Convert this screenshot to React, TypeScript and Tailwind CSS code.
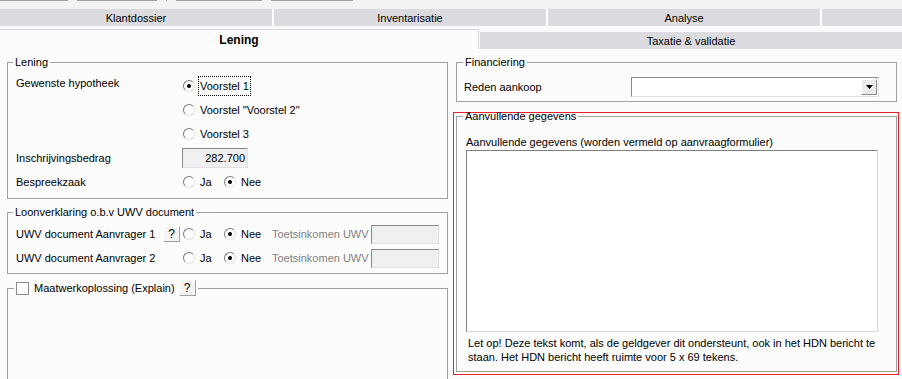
const Radio = ({ checked }: { checked?: boolean }) => (
  <span className="inline-flex w-[12px] h-[12px] shrink-0 items-center justify-center rounded-full border border-t-[#7d7d7d] border-l-[#7d7d7d] border-r-[#e2e2e2] border-b-[#e2e2e2] bg-white">
    {checked && <span className="w-[4px] h-[4px] rounded-full bg-black" />}
  </span>
);

const HelpButton = () => (
  <span className="inline-flex w-[17px] h-[16px] shrink-0 items-center justify-center bg-[#f4f4f4] border border-t-white border-l-white border-r-[#a0a0a0] border-b-[#a0a0a0] text-[12px] leading-none">
    ?
  </span>
);

const RadioOption = ({
  label,
  checked,
  width,
  focused,
}: {
  label: string;
  checked?: boolean;
  width?: string;
  focused?: boolean;
}) => (
  <span className={`flex items-center whitespace-nowrap ${width ?? ""}`}>
    <Radio checked={checked} />
    <span
      className={`ml-[3px] h-[20px] px-[1px] leading-[18px] border ${
        focused ? "border-dotted border-black" : "border-transparent"
      }`}
    >
      {label}
    </span>
  </span>
);

const YesNo = () => (
  <>
    <RadioOption label="Ja" width="w-[41px]" />
    <RadioOption label="Nee" checked width="w-[48px]" />
  </>
);

const ReadonlyBox = ({ value, className }: { value?: string; className: string }) => (
  <span
    className={`flex items-center justify-end pr-[2px] bg-[#f0f0f0] border border-t-[#8a8a8a] border-l-[#8a8a8a] border-r-[#e0e0e0] border-b-[#e0e0e0] ${className}`}
  >
    {value}
  </span>
);

const UwvRow = ({ label, help }: { label: string; help?: boolean }) => (
  <div className="flex items-center h-[24px] whitespace-nowrap">
    {help ? (
      <>
        <span className="w-[147px]">{label}</span>
        <HelpButton />
        <span className="w-[3px]" />
      </>
    ) : (
      <span className="w-[167px]">{label}</span>
    )}
    <YesNo />
    <span className="w-[99px] text-[#808080]">Toetsinkomen UWV</span>
    <ReadonlyBox className="w-[68px] h-[19px]" />
  </div>
);

export default function App() {
  const topTabs = [
    { label: "Klantdossier", w: "w-[272px]" },
    { label: "Inventarisatie", w: "w-[272px]" },
    { label: "Analyse", w: "w-[272px]" },
    { label: "", w: "flex-1" },
  ];

  return (
    <div className="w-[902px] h-[379px] overflow-hidden bg-[#fcfcfc] text-[11px] leading-[14px] text-black font-['Liberation_Sans',Arial,sans-serif]">
      {/* strip of tabs above, cut off */}
      <div className="h-[9px] bg-[#f3f3f3] flex items-start">
        <span className="h-px w-[68px] bg-[#a0a0a0]" />
        <span className="h-px w-[80px] ml-[9px] bg-[#a0a0a0]" />
        <span className="h-px w-px ml-[9px] bg-[#a0a0a0]" />
        <span className="h-px w-[86px] ml-[9px] bg-[#a0a0a0]" />
        <span className="h-px w-[82px] ml-[9px] bg-[#a0a0a0]" />
      </div>

      {/* first tab row */}
      <div className="flex h-[17px] gap-[2px] bg-white">
        {topTabs.map((t, i) => (
          <div key={i} className={`${t.w} bg-[#dcdce0] flex items-center justify-center`}>
            {t.label}
          </div>
        ))}
      </div>

      {/* second tab row */}
      <div className="flex h-[23px] pt-[3px] bg-[#fafafa]">
        <div className="w-[479px] border-t border-r border-[#dadada] bg-[#fcfcfc] flex items-center justify-center font-bold text-[12px]">
          Lening
        </div>
        <div className="flex-1 ml-[1px] mt-[3px] h-[17px] bg-[#dcdce0] flex items-center justify-center">
          Taxatie &amp; validatie
        </div>
      </div>

      <div className="flex">
        {/* left column */}
        <div className="w-[451px] pt-[6px]">
          <fieldset className="ml-[7px] w-[441px] border border-[#a0a0a0] px-[8px] pt-[5px] pb-[4px]">
            <legend className="-ml-[3px] px-[2px] leading-[14px]">Lening</legend>
            <div className="flex">
              <span className="w-[167px] pt-[2px]">Gewenste hypotheek</span>
              <div className="flex flex-col">
                <div className="h-[24px] flex items-center">
                  <RadioOption label="Voorstel 1" checked focused />
                </div>
                <div className="h-[24px] flex items-center">
                  <RadioOption label={'Voorstel "Voorstel 2"'} />
                </div>
                <div className="h-[24px] flex items-center">
                  <RadioOption label="Voorstel 3" />
                </div>
              </div>
            </div>
            <div className="flex items-center h-[24px]">
              <span className="w-[166px]">Inschrijvingsbedrag</span>
              <ReadonlyBox value="282.700" className="w-[66px] h-[20px]" />
            </div>
            <div className="flex items-center h-[24px]">
              <span className="w-[167px]">Bespreekzaak</span>
              <YesNo />
            </div>
          </fieldset>

          <fieldset className="mt-[6px] ml-[7px] w-[441px] border border-[#a0a0a0] px-[8px] pt-[3px] pb-[3px]">
            <legend className="-ml-[3px] px-[2px] leading-[14px]">Loonverklaring o.b.v UWV document</legend>
            <UwvRow label="UWV document Aanvrager 1" help />
            <UwvRow label="UWV document Aanvrager 2" />
          </fieldset>

          <fieldset className="mt-[6px] ml-[7px] w-[441px] h-[140px] border border-[#a0a0a0] px-[8px]">
            <legend className="-ml-[2px] px-[2px] flex items-center h-[16px]">
              <span className="w-[13px] h-[13px] border border-[#8c8c8c] bg-white" />
              <span className="ml-[5px]">Maatwerkoplossing (Explain)</span>
              <span className="ml-[4px] flex">
                <HelpButton />
              </span>
            </legend>
          </fieldset>
        </div>

        {/* right column */}
        <div className="flex-1 pt-[6px]">
          <fieldset className="ml-[5px] w-[441px] border border-[#a0a0a0] pl-[7px] pt-[8px] pb-[4px]">
            <legend className="-ml-[1px] px-[2px] leading-[14px]">Financiering</legend>
            <div className="flex items-center h-[20px]">
              <span className="w-[167px]">Reden aankoop</span>
              <span className="w-[248px] h-[20px] flex items-center justify-end bg-white border border-t-[#8a8a8a] border-l-[#8a8a8a] border-r-[#e0e0e0] border-b-[#e0e0e0] pr-[1px]">
                <span className="w-[16px] h-[16px] flex items-center justify-center bg-[#ececec] border border-t-white border-l-white border-r-[#8a8a8a] border-b-[#8a8a8a]">
                  <svg width="7" height="4" viewBox="0 0 7 4">
                    <path d="M0 0h7L3.5 4z" fill="#000" />
                  </svg>
                </span>
              </span>
            </div>
          </fieldset>

          <div className="mt-[10px] ml-[2px] w-[446px] h-[263px] border border-[#e8202a] pl-[2px] pr-[1px] pb-[2px] flex flex-col">
            <fieldset className="flex-1 border border-[#a0a0a0] pl-[9px] pt-[16px]">
              <legend className="-ml-[3px] px-[2px] leading-[6px]">Aanvullende gegevens</legend>
              <div>Aanvullende gegevens (worden vermeld op aanvraagformulier)</div>
              <div className="mt-[1px] w-[412px] h-[182px] bg-white border border-t-[#808080] border-l-[#808080] border-r-[#d8d8d8] border-b-[#d8d8d8]" />
              <p className="mt-[4px] ml-[2px] w-[418px]">
                Let op! Deze tekst komt, als de geldgever dit ondersteunt, ook in het HDN bericht te staan. Het HDN
                bericht heeft ruimte voor 5 x 69 tekens.
              </p>
            </fieldset>
          </div>
        </div>
      </div>
    </div>
  );
}
